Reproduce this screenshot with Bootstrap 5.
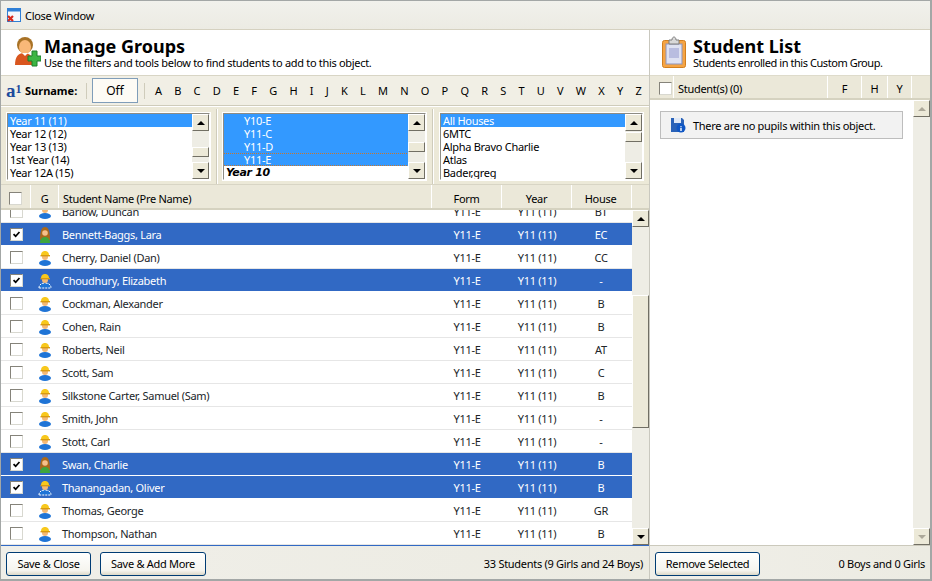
<!DOCTYPE html>
<html lang="en">
<head>
    <meta charset="UTF-8">
    <title>Manage Groups</title>
    <link href="https://cdn.jsdelivr.net/npm/bootstrap@5.3.0/dist/css/bootstrap.min.css" rel="stylesheet">
    <style>
        html, body { height: 100%; overflow: hidden; }
        body { font: 11px/13px "Noto Sans", "Liberation Sans", sans-serif; letter-spacing: -.29px; color: #000; background: #fff; }
        .app-frame { height: 581px; border: 2px solid #a3a7a6; border-top-width: 1px; border-left-width: 1px; }
        .title-bar { height: 29px; background: linear-gradient(#f1f1ec, #ecebe3); border-bottom: 1px solid #d5d1c0; padding-left: 6px; gap: 3px; }
        .left-pane { width: 649px; flex: none; border-right: 1px solid #c9c8bf; }
        .right-pane { flex: 1; min-width: 0; }
        .page-head { height: 45px; padding: 6px 0 0 14px; gap: 3px; }
        .head-icon { margin-top: -1px; }
        .head-sub { letter-spacing: -.31px; }
        .head-right { height: 45px; padding: 6px 0 0 12px; gap: 7px; }
        .head-right .head-sub { letter-spacing: -.44px; }
        .head-title { font: bold 18px/20px "Noto Sans", sans-serif; letter-spacing: 0; }
        .alpha-bar { height: 31px; background: #f1efe5; border-top: 1px solid #d8d5c5; border-bottom: 1px solid #cfccbb; padding-left: 5px; }
        .a1-mark { font: bold 19px/17px "Liberation Serif", serif; color: #1c4a9c; width: 19px; letter-spacing: 0; }
        .a1-mark sup { font-size: 12px; top: -.35em; }
        .surname-label { font-weight: bold; width: 61px; letter-spacing: 0; }
        .v-sep { width: 1px; height: 16px; background: #cfccbb; }
        .off-btn { width: 46px; height: 25px; margin: 0 6px 0 5px; border: 1px solid #7f9db9; background: #fdfbf5; border-radius: 0; font-size: 12px; padding: 0; color: #000; }
        .alpha-letters { width: 487px; margin-left: 10px; letter-spacing: 0; }
        .filter-strip { height: 79px; background: #ece9d8; border-top: 1px solid #fff; border-bottom: 1px solid #d8d5c5; padding: 2px 0 0 2px; }
        .filter-cell { height: 75px; width: 211px; padding: 4px; flex: none; }
        .cell-rule { width: 2px; height: 100%; margin: 0 1px 0 2px; border-left: 1px solid #cfccbb; border-right: 1px solid #fff; flex: none; }
        .cell-rule-last { margin-right: 2px; }
        .pick-box { height: 67px; border: 1px solid #8d8c84; border-right-color: #fff; border-bottom-color: #fff; outline: 1px solid #fff; background: #fff; overflow: hidden; }
        .pick-list { width: 184px; flex: none; }
        .pick-item { height: 13px; padding-left: 2px; line-height: 13px; white-space: nowrap; }
        .pick-item.is-on { background: #3399ff; color: #fff; }
        .pick-item.is-focus { background-image: repeating-linear-gradient(90deg, #c8762e 0 1px, transparent 1px 2px), repeating-linear-gradient(90deg, #c8762e 0 1px, transparent 1px 2px); background-size: 100% 1px; background-position: top, bottom; background-repeat: no-repeat; }
        .indent { padding-left: 20px; }
        .year-head { font: italic bold 11px/13px "DejaVu Sans", sans-serif; letter-spacing: -.3px; }
        .scroll-col { width: 17px; flex: none; background: #eeede5; }
        .scroll-arrow { width: 17px; height: 17px; flex: none; background: #ece9d8; border: 1px solid; border-color: #fff #716f64 #716f64 #fff; }
        .scroll-arrow::after { content: ""; border-left: 4px solid transparent; border-right: 4px solid transparent; }
        .arrow-up::after { border-bottom: 4px solid #000; }
        .arrow-down::after { border-top: 4px solid #000; }
        .arrow-dim::after { border-top-color: #aca899; border-bottom-color: #aca899; }
        .scroll-thumb { height: 10px; background: #ece9d8; border: 1px solid; border-color: #fff #716f64 #716f64 #fff; flex: none; }
        .thumb-one { margin-bottom: 5px; }
        .thumb-two { margin-bottom: 10px; }
        .thumb-three { margin-top: 1px; }
        .grid-thumb { height: 133px; margin-top: 68px; }
        .grid-head { height: 25px; background: #ebe8d9; border-bottom: 2px solid #d5d2c0; }
        .head-cell { height: 100%; border-right: 1px solid #fff; padding-top: 3px; }
        .col-tick { width: 30px; flex: none; }
        .col-g { width: 28px; flex: none; }
        .col-name { width: 373px; flex: none; padding-left: 4px; text-align: left; }
        .col-form { width: 70px; flex: none; }
        .col-year { width: 70px; flex: none; }
        .col-house { width: 60px; flex: none; padding-right: 2px; }
        .grid-body { height: 335px; overflow: hidden; }
        .rows-wrap { flex: 1; min-width: 0; overflow: hidden; }
        .student-table { table-layout: fixed; width: 631px; margin: -11px 0 0; --bs-table-bg: transparent; }
        .student-table td { height: 23px; padding: 2px 0 0; border-bottom: 1px solid #e6e6e6; vertical-align: middle; white-space: nowrap; background: #fff; box-shadow: none; }
        .student-table td.name-td { padding-left: 3px; }
        .student-table td.house-td { padding-right: 2px; }
        .student-table tr.is-picked td { background: #3169c4; color: #fff; border-bottom-color: #fff; }
        .tick { width: 13px; height: 13px; margin: 0; display: block; border-radius: 0 !important; border: 1px solid; border-color: #85837a #d8d8d0 #d8d8d0 #85837a; background-color: #fff; box-shadow: none !important; }
        .tick:checked[type=checkbox] { background-color: #fff; border-color: #85837a #d8d8d0 #d8d8d0 #85837a; background-size: 100%; background-image: url("data:image/svg+xml,%3csvg xmlns='http://www.w3.org/2000/svg' viewBox='0 0 13 13'%3e%3cpath fill='none' stroke='%23000' stroke-width='2' d='M3 6l2.500 2.500L10 3.500'/%3e%3c/svg%3e"); }
        .grid-foot { height: 34px; background: linear-gradient(90deg, #f0efe9, #ecebe2); border-top: 1px solid #3169c4; padding: 2px 5px 0; gap: 9px; }
        .right-foot { height: 34px; background: linear-gradient(90deg, #f0efe9, #ecebe2); border-top: 1px solid #cbc9bc; padding: 2px 5px 0; }
        .xp-btn { height: 24px; padding: 0; font-size: 11px; letter-spacing: -.29px; line-height: 1; color: #000; border: 1px solid #003c74; border-radius: 3px; background: linear-gradient(#fff, #f5f4ee 80%, #dcd8c8); }
        .save-close { width: 85px; }
        .save-more { width: 106px; }
        .remove-sel { width: 105px; }
        .foot-count { margin-right: 1px; }
        .list-head { height: 25px; background: #ebe8d9; border-top: 1px solid #dedbcb; border-bottom: 2px solid #d5d2c0; }
        .list-tick { width: 24px; padding-right: 1px; }
        .list-name { width: 154px; padding-left: 4px; }
        .list-f { width: 34px; }
        .list-h { width: 26px; }
        .list-y { width: 24px; }
        .empty-note { height: 28px; margin: 11px 10px 0; background: #f2f2f2; border: 1px solid #bdbdbd; padding-left: 9px; gap: 7px; }
    </style>
</head>
<body>
    <svg width="0" height="0" class="d-block">
        <defs>
            <symbol id="boy" viewBox="0 0 14 16">
                <ellipse cx="7" cy="13" rx="6" ry="3" fill="#1f74d6"/>
                <circle cx="7" cy="7" r="3" fill="#f4b977"/>
                <path d="M3 5.500C3 2 5 1 7 1s4 1 4 4.500z" fill="#f8c81c"/>
                <path d="M2.500 5h9.500v1.400H2.500z" fill="#d89a10"/>
            </symbol>
            <symbol id="boy-lit" viewBox="0 0 14 16">
                <path d="M1 15c0-3 2-5 6-5s6 2 6 5z" fill="#1f74d6" stroke="#fff" stroke-dasharray="2 1"/>
                <circle cx="7" cy="7" r="3" fill="#f4b977"/>
                <path d="M3 5.500C3 2 5 1 7 1s4 1 4 4.500z" fill="#f8c81c"/>
                <path d="M2.500 5h9.500v1.400H2.500z" fill="#d89a10"/>
            </symbol>
            <symbol id="girl" viewBox="0 0 14 16">
                <path d="M2 13C2 4 3.500 0 7 0s5 4 5 13z" fill="#a9691c"/>
                <circle cx="7" cy="6" r="2.800" fill="#f6c08a"/>
                <path d="M2 16c0-4 2-6 5-6s5 2 5 6z" fill="#3fa53c"/>
            </symbol>
        </defs>
    </svg>

    <div class="app-frame d-flex flex-column">
        <div class="title-bar d-flex align-items-center">
            <svg width="15" height="15" viewBox="0 0 15 15">
                <rect x=".5" y=".5" width="13" height="13" fill="#f5f8fc" stroke="#2f7fd6"/>
                <rect x="1" y="1" width="12" height="2.500" fill="#2f7fd6"/>
                <path d="M1 8l5 5M6 8l-5 5" stroke="#d8281c" stroke-width="2.200"/>
            </svg>
            <span>Close Window</span>
        </div>

        <div class="d-flex flex-grow-1">
            <div class="left-pane d-flex flex-column">
                <div class="page-head d-flex">
                    <svg width="26" height="32" viewBox="0 0 26 32" class="head-icon flex-shrink-0">
                        <path d="M0 30c0-8 3-12 9-12s10 4 10 12z" fill="#d9561f"/>
                        <circle cx="10" cy="10" r="8" fill="#a87226"/>
                        <ellipse cx="10" cy="12" rx="6" ry="7" fill="#f9b878"/>
                        <path d="M7 18h6l-3 3z" fill="#fff"/>
                        <path d="M17 16h5v5h4v5h-4v5h-5v-5h-4v-5h4z" fill="#3cb543" stroke="#1c7f2c"/>
                    </svg>
                    <div>
                        <div class="head-title">Manage Groups</div>
                        <div class="head-sub">Use the filters and tools below to find students to add to this object.</div>
                    </div>
                </div>

                <div class="alpha-bar d-flex align-items-center">
                    <span class="a1-mark">a<sup>1</sup></span>
                    <span class="surname-label">Surname:</span>
                    <span class="v-sep"></span>
                    <button class="btn off-btn">Off</button>
                    <span class="v-sep"></span>
                    <div class="alpha-letters d-flex justify-content-between" id="alphaLetters"></div>
                </div>

                <div class="filter-strip d-flex">
                    <div class="filter-cell">
                        <div class="pick-box d-flex">
                            <div class="pick-list">
                                <div class="pick-item is-on">Year 11 (11)</div>
                                <div class="pick-item">Year 12 (12)</div>
                                <div class="pick-item">Year 13 (13)</div>
                                <div class="pick-item">1st Year (14)</div>
                                <div class="pick-item">Year 12A (15)</div>
                            </div>
                            <div class="scroll-col d-flex flex-column">
                                <div class="scroll-arrow arrow-up d-flex align-items-center justify-content-center"></div>
                                <div class="flex-grow-1 d-flex flex-column justify-content-end">
                                    <div class="scroll-thumb thumb-one"></div>
                                </div>
                                <div class="scroll-arrow arrow-down d-flex align-items-center justify-content-center"></div>
                            </div>
                        </div>
                    </div>
                    <div class="cell-rule"></div>
                    <div class="filter-cell">
                        <div class="pick-box d-flex">
                            <div class="pick-list">
                                <div class="pick-item is-on indent">Y10-E</div>
                                <div class="pick-item is-on indent">Y11-C</div>
                                <div class="pick-item is-on indent">Y11-D</div>
                                <div class="pick-item is-on is-focus indent">Y11-E</div>
                                <div class="pick-item year-head">Year 10</div>
                            </div>
                            <div class="scroll-col d-flex flex-column">
                                <div class="scroll-arrow arrow-up d-flex align-items-center justify-content-center"></div>
                                <div class="flex-grow-1 d-flex flex-column justify-content-end">
                                    <div class="scroll-thumb thumb-two"></div>
                                </div>
                                <div class="scroll-arrow arrow-down d-flex align-items-center justify-content-center"></div>
                            </div>
                        </div>
                    </div>
                    <div class="cell-rule cell-rule-last"></div>
                    <div class="filter-cell">
                        <div class="pick-box d-flex">
                            <div class="pick-list">
                                <div class="pick-item is-on">All Houses</div>
                                <div class="pick-item">6MTC</div>
                                <div class="pick-item">Alpha Bravo Charlie</div>
                                <div class="pick-item">Atlas</div>
                                <div class="pick-item">Bader,greg</div>
                            </div>
                            <div class="scroll-col d-flex flex-column">
                                <div class="scroll-arrow arrow-up d-flex align-items-center justify-content-center"></div>
                                <div class="flex-grow-1">
                                    <div class="scroll-thumb thumb-three"></div>
                                </div>
                                <div class="scroll-arrow arrow-down d-flex align-items-center justify-content-center"></div>
                            </div>
                        </div>
                    </div>
                </div>

                <div class="grid-head d-flex text-center align-items-center">
                    <div class="head-cell d-flex align-items-center justify-content-center col-tick"><input type="checkbox" class="form-check-input tick"></div>
                    <div class="head-cell d-flex align-items-center justify-content-center col-g">G</div>
                    <div class="head-cell d-flex align-items-center col-name">Student Name (Pre Name)</div>
                    <div class="head-cell d-flex align-items-center justify-content-center col-form">Form</div>
                    <div class="head-cell d-flex align-items-center justify-content-center col-year">Year</div>
                    <div class="head-cell d-flex align-items-center justify-content-center col-house">House</div>
                </div>

                <div class="grid-body d-flex">
                    <div class="rows-wrap">
                        <table class="table student-table">
                            <colgroup>
                                <col class="col-tick"><col class="col-g"><col class="col-name">
                                <col class="col-form"><col class="col-year"><col class="col-house">
                            </colgroup>
                            <tbody id="studentRows"></tbody>
                        </table>
                    </div>
                    <div class="scroll-col d-flex flex-column">
                        <div class="scroll-arrow arrow-up d-flex align-items-center justify-content-center"></div>
                        <div class="flex-grow-1">
                            <div class="scroll-thumb grid-thumb"></div>
                        </div>
                        <div class="scroll-arrow arrow-down d-flex align-items-center justify-content-center"></div>
                    </div>
                </div>

                <div class="grid-foot d-flex align-items-center">
                    <button class="btn xp-btn save-close">Save &amp; Close</button>
                    <button class="btn xp-btn save-more">Save &amp; Add More</button>
                    <span class="ms-auto foot-count">33 Students (9 Girls and 24 Boys)</span>
                </div>
            </div>

            <div class="right-pane d-flex flex-column">
                <div class="head-right d-flex">
                    <svg width="24" height="32" viewBox="0 0 24 32" class="flex-shrink-0">
                        <rect x=".5" y="4.500" width="23" height="27" rx="2" fill="#f6a443" stroke="#d27f1e"/>
                        <rect x="4" y="8" width="16" height="20" fill="#dfe2f2" stroke="#8f93b8"/>
                        <rect x="7" y="12" width="10" height="10" fill="#b9bde0"/>
                        <path d="M7 8V4h3c0-4 4-4 4 0h3v4z" fill="#d9d9d9" stroke="#7d7d7d"/>
                    </svg>
                    <div>
                        <div class="head-title">Student List</div>
                        <div class="head-sub">Students enrolled in this Custom Group.</div>
                    </div>
                </div>
                <div class="list-head d-flex">
                    <div class="head-cell d-flex align-items-center justify-content-end list-tick"><input type="checkbox" class="form-check-input tick"></div>
                    <div class="head-cell d-flex align-items-center list-name">Student(s) (0)</div>
                    <div class="head-cell d-flex align-items-center justify-content-center list-f">F</div>
                    <div class="head-cell d-flex align-items-center justify-content-center list-h">H</div>
                    <div class="head-cell d-flex align-items-center justify-content-center list-y">Y</div>
                </div>
                <div class="d-flex flex-grow-1">
                    <div class="flex-grow-1">
                        <div class="empty-note d-flex align-items-center">
                            <svg width="16" height="16" viewBox="0 0 16 16">
                                <path d="M1 1h11l2 2v12H1z" fill="#2a62b8"/>
                                <rect x="4" y="1" width="7" height="5" fill="#dfe8f6"/>
                                <circle cx="11" cy="11" r="4.500" fill="#0f56c4"/>
                                <path d="M11 9v.8M11 10.800V14" stroke="#fff" stroke-width="1.400"/>
                            </svg>
                            <span>There are no pupils within this object.</span>
                        </div>
                    </div>
                    <div class="scroll-col d-flex flex-column">
                        <div class="scroll-arrow arrow-up arrow-dim d-flex align-items-center justify-content-center"></div>
                        <div class="flex-grow-1"></div>
                        <div class="scroll-arrow arrow-down arrow-dim d-flex align-items-center justify-content-center"></div>
                    </div>
                </div>
                <div class="right-foot d-flex align-items-center justify-content-between">
                    <button class="btn xp-btn remove-sel">Remove Selected</button>
                    <span>0 Boys and 0 Girls</span>
                </div>
            </div>
        </div>
    </div>

    <script src="https://cdn.jsdelivr.net/npm/bootstrap@5.3.0/dist/js/bootstrap.bundle.min.js"></script>
    <script>
        // alphabet filter
        document.getElementById('alphaLetters').innerHTML =
            'ABCDEFGHIJKLMNOPQRSTUVWXYZ'.split('').map(l => `<span>${l}</span>`).join('');

        // name, house, gender, picked
        const students = [
            ['Barlow, Duncan', 'BT', 'b', 0],
            ['Bennett-Baggs, Lara', 'EC', 'g', 1],
            ['Cherry, Daniel (Dan)', 'CC', 'b', 0],
            ['Choudhury, Elizabeth', '-', 'b', 1],
            ['Cockman, Alexander', 'B', 'b', 0],
            ['Cohen, Rain', 'B', 'b', 0],
            ['Roberts, Neil', 'AT', 'b', 0],
            ['Scott, Sam', 'C', 'b', 0],
            ['Silkstone Carter, Samuel (Sam)', 'B', 'b', 0],
            ['Smith, John', '-', 'b', 0],
            ['Stott, Carl', '-', 'b', 0],
            ['Swan, Charlie', 'B', 'g', 1],
            ['Thanangadan, Oliver', 'B', 'b', 1],
            ['Thomas, George', 'GR', 'b', 0],
            ['Thompson, Nathan', 'B', 'b', 0]
        ];
        document.getElementById('studentRows').innerHTML = students.map(([name, house, g, picked]) => {
            const icon = g === 'g' ? 'girl' : (picked ? 'boy-lit' : 'boy');
            return `<tr class="${picked ? 'is-picked' : ''}">
                <td><div class="d-flex justify-content-center"><input type="checkbox" class="form-check-input tick" ${picked ? 'checked' : ''}></div></td>
                <td><svg width="14" height="16" class="d-block mx-auto"><use href="#${icon}"/></svg></td>
                <td class="name-td">${name}</td>
                <td class="text-center">Y11-E</td>
                <td class="text-center">Y11 (11)</td>
                <td class="text-center house-td">${house}</td>
            </tr>`;
        }).join('');
    </script>
</body>
</html>
